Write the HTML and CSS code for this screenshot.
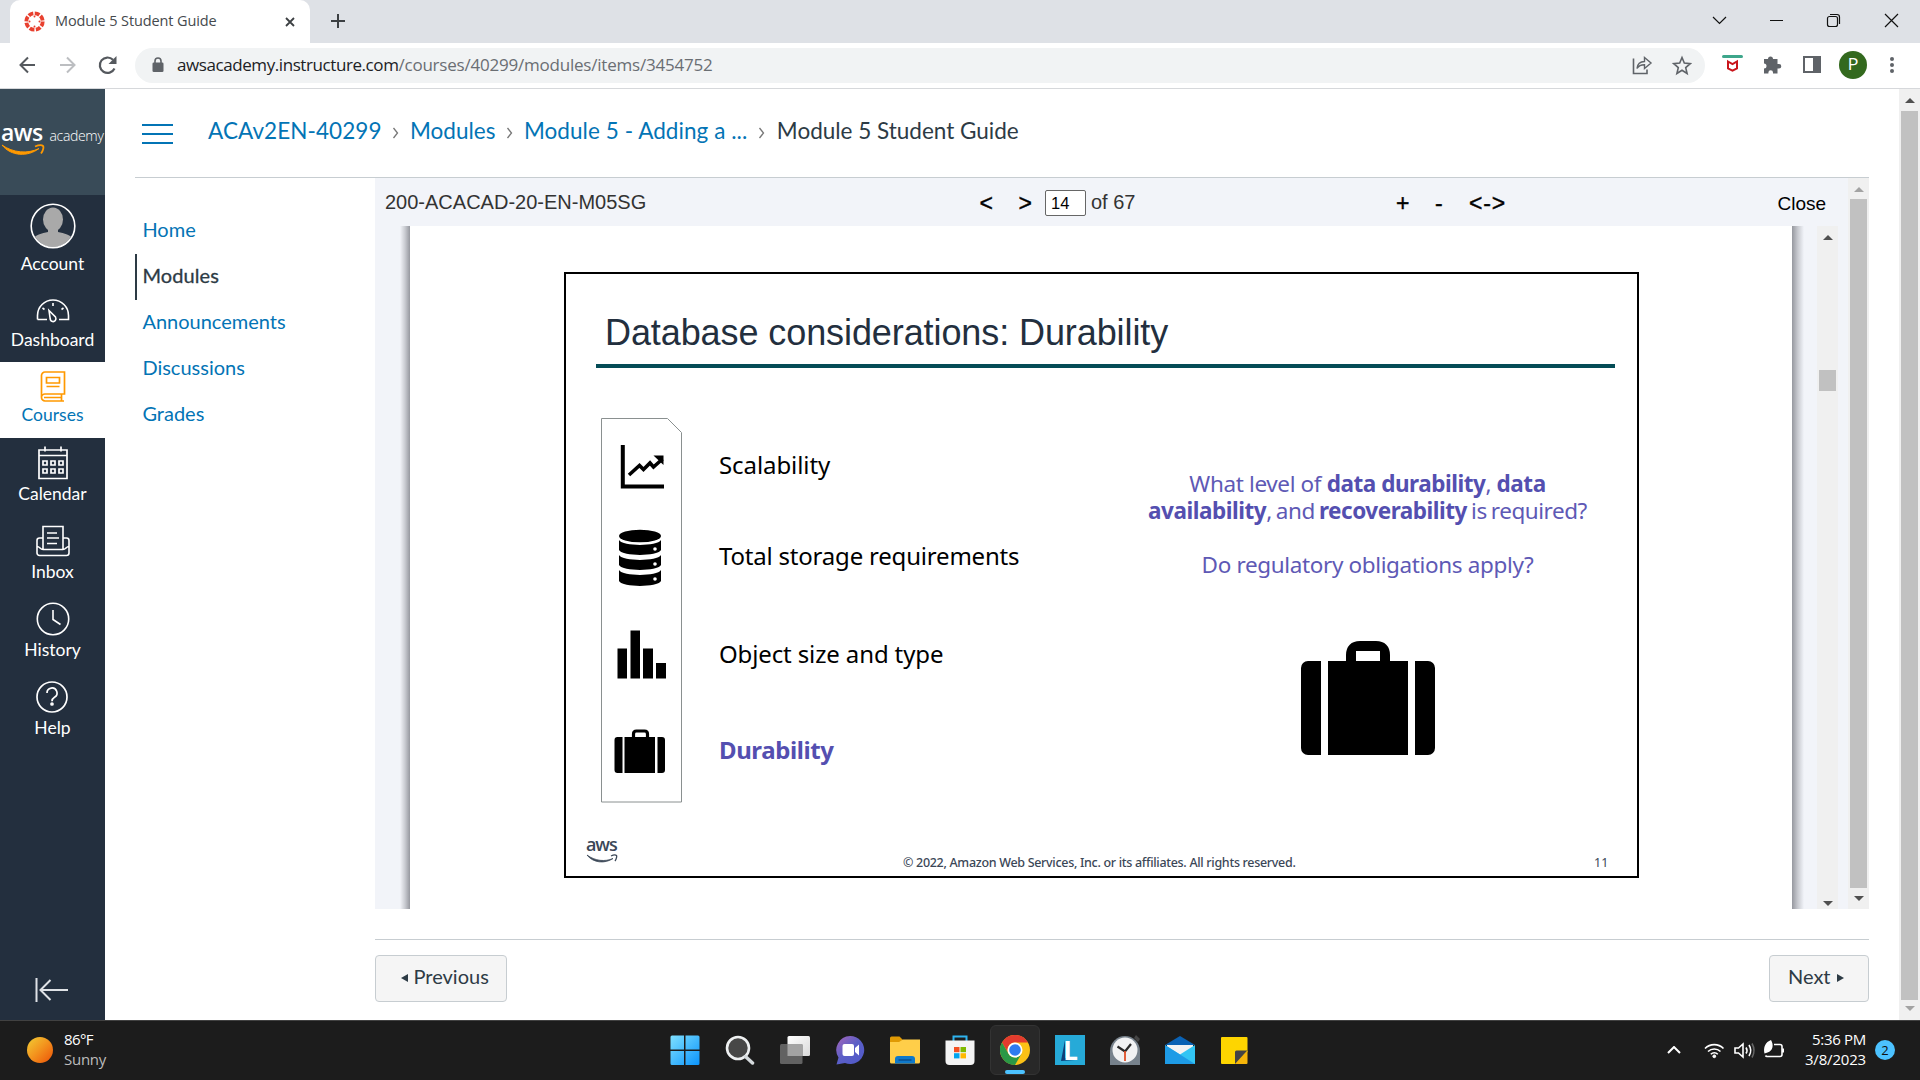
FILE: index.html
```html
<!DOCTYPE html>
<html lang="en">
<head>
<meta charset="utf-8">
<title>Module 5 Student Guide</title>
<link rel="stylesheet" href="styles.css">
</head>
<body>
<div class="screen">
  <header class="tabstrip">
    <div class="tab">
      <svg class="favicon" viewBox="0 0 22 22"><circle cx="11" cy="11" r="8.6" fill="none" stroke="#e8402f" stroke-width="4" stroke-dasharray="5.200 1.554"/><g fill="#e8402f"><circle cx="11" cy="5.800" r="1"/><circle cx="11" cy="16.200" r="1"/><circle cx="5.800" cy="11" r="1"/><circle cx="16.200" cy="11" r="1"/></g></svg>
      <span class="tab-title">Module 5 Student Guide</span>
      <svg class="tab-x" viewBox="0 0 10 10"><path d="M1 1l8 8M9 1l-8 8" stroke="#3c4043" stroke-width="1.8"/></svg>
    </div>
    <svg class="tab-plus" viewBox="0 0 16 16"><path d="M8 1v14M1 8h14" stroke="#3c4043" stroke-width="2"/></svg>
    <svg class="win-controls" viewBox="0 0 190 20" fill="none" stroke="#111" stroke-width="1.2"><path d="M1 7l6.500 6.500L14 7M58 10.500h13"/><rect x="115.500" y="6.500" width="10" height="10" rx="2"/><path d="M118 4.500h7a2.500 2.500 0 0 1 2.500 2.500v7"/><path d="M173 4l13 13M186 4l-13 13"/></svg>
  </header>
  <div class="toolbar">
    <svg class="nav-btns" viewBox="0 0 100 20" fill="none" stroke-width="2"><path d="M17 10H2.500M10 2.500L2.500 10l7.500 7.500" stroke="#55595e"/><path d="M42 10h14.500M49 2.500l7.500 7.500-7.500 7.500" stroke="#bcbec1"/><path d="M96.500 13.500A7.700 7.700 0 1 1 95 4.800" stroke="#55595e" stroke-width="2.200"/><path d="M98.500 1v8h-8z" fill="#55595e"/></svg>
    <div class="omnibox">
      <svg class="lock" viewBox="0 0 12 16"><rect x="0.500" y="5.500" width="11" height="9.500" rx="1.300" fill="#5f6368"/><path d="M3 6V4a3 3 0 0 1 6 0v2" fill="none" stroke="#5f6368" stroke-width="1.600"/></svg>
      <span class="url"><b>awsacademy.instructure.com</b><span>/courses/40299/modules/items/3454752</span></span>
      <svg class="omni-icons" viewBox="0 0 60 22" fill="none" stroke="#5f6368" stroke-width="1.600"><path d="M1.500 4.500v15h13.500v-4"/><path d="M5 14.500c.5-4.500 3-7 7.500-7V3.500l6.500 5.500-6.500 5.500V10.800c-3.500 0-6 1.200-7.500 3.700z" stroke-width="1.400"/><path d="M50 3.500l2.300 5.600 6 .5-4.600 4 1.400 5.900L50 16.300l-5.100 3.200 1.400-5.900-4.600-4 6-.5z"/></svg>
    </div>
    <svg class="ext-icons" viewBox="0 0 102 22"><rect x="0" y="1" width="21" height="3" rx="1.500" fill="#3da68b"/><path d="M6 7.500l4.500 2.700 4.500-2.700v7l-4.500 2.200L6 14.500z" fill="none" stroke="#c9151b" stroke-width="2"/><path d="M42 5h4a2.500 2.500 0 0 1 5 0h4.500v5h1.500a2.300 2.300 0 0 1 0 4.600h-1.500V19.500h-4.500v-1a2.300 2.300 0 0 0-4.600 0v1H42v-5a2.500 2.500 0 0 0 0-5z" fill="#5f6368"/><rect x="82" y="3" width="16" height="15" fill="none" stroke="#5f6368" stroke-width="2"/><rect x="91" y="3" width="7" height="15" fill="#5f6368"/></svg>
    <span class="avatar">P</span>
    <svg class="kebab" viewBox="0 0 4 20" fill="#5f6368"><circle cx="2" cy="4" r="2"/><circle cx="2" cy="10" r="2"/><circle cx="2" cy="16" r="2"/></svg>
  </div>

  <div class="page">
    <nav class="rail">
      <div class="brand">
        <div class="brand-row"><b>aws</b><span>academy</span></div>
        <svg class="smile" viewBox="0 0 44 12"><path d="M1 1C12 9 27 10 38 4.500C27 13 10 12.500 1 1z" fill="#f90" stroke="#f90"/><path d="M34 2.500c4-1.500 7-1.500 8-.5s0 5-2 7.500" fill="none" stroke="#f90" stroke-width="1.800"/></svg>
      </div>
      <a class="rail-item account"><svg viewBox="0 0 46 46"><defs><clipPath id="av"><circle cx="23" cy="23" r="21"/></clipPath></defs><g clip-path="url(#av)" fill="#a9a9a9"><ellipse cx="23" cy="16.500" rx="10" ry="12"/><path d="M18 24h10v5c6 1 13 3 16 8v9H2v-9c3-5 10-7 16-8z"/></g><circle cx="23" cy="23" r="21.800" fill="none" stroke="#fff" stroke-width="1.600"/></svg><span>Account</span></a>
      <a class="rail-item dash"><svg viewBox="0 0 34 24" fill="none" stroke="#fff" stroke-width="1.600"><path d="M1.500 20.500v-4a15.500 15.500 0 0 1 31 0v4H23M1.500 20.500H11"/><path d="M13 11.500l6.500 6.500c1.500 3-1 5-3 4.500-2-.5-2.500-3-2.500-4z"/><path d="M6.500 9l2 1.500M17 4v3M27.500 9l-2 1.500"/></svg><span>Dashboard</span></a>
      <a class="rail-item courses"><svg viewBox="0 0 26 31" fill="none" stroke="#f90" stroke-width="1.700"><path d="M1.500 26V4.500a3.500 3.500 0 0 1 3.500-3.500h19.500v22H5a3.300 3.300 0 0 0 0 7h19M21.500 23v7M4 26.500h17"/><path d="M6.500 6.500h13v5.500h-13zM6.500 15.500h13"/></svg><span>Courses</span></a>
      <a class="rail-item cal"><svg viewBox="0 0 30 34" fill="none" stroke="#fff" stroke-width="1.700"><path d="M1 4h28v28.500H1zM1 9.500h28M7 .5v5M23 .5v5"/><path d="M5 15h4v4H5zM13 15h4v4h-4zM21 15h4v4h-4zM5 23h4v4H5zM13 23h4v4h-4zM21 23h4v4h-4z"/></svg><span>Calendar</span></a>
      <a class="rail-item inbox"><svg viewBox="0 0 34 32" fill="none" stroke="#fff" stroke-width="1.600"><path d="M7 24V1.500h20V24M7 13H3.500a2.500 2.500 0 0 0-2.500 2.500V28a2.500 2.500 0 0 0 2.500 2.500h27A2.500 2.500 0 0 0 33 28V15.500a2.500 2.500 0 0 0-2.500-2.500H27M1 21.500c3 0 3 3 6 3h20c3 0 3-3 6-3M11 8h10M11 13h12M11 18.500h10"/></svg><span>Inbox</span></a>
      <a class="rail-item hist"><svg viewBox="0 0 34 34" fill="none" stroke="#fff" stroke-width="1.600"><circle cx="17" cy="17" r="15.700"/><path d="M17 8v9.500l7.500 5"/></svg><span>History</span></a>
      <a class="rail-item help"><svg viewBox="0 0 34 34" fill="none" stroke="#fff" stroke-width="1.700"><circle cx="16" cy="17" r="15"/><path d="M11 13a5 5 0 1 1 7.500 4.300c-2 1.200-2.500 2-2.500 4"/><circle cx="16" cy="24" r="1"/></svg><span>Help</span></a>
      <svg class="collapse" viewBox="0 0 34 24" fill="none" stroke="#dfe2e6" stroke-width="2"><path d="M1.500 0v24M33 12H6M15.500 2L5.500 12l10 10"/></svg>
    </nav>

    <main class="content">
      <div class="crumbs">
        <svg class="burger" viewBox="0 0 31 20"><path d="M0 1h31M0 10h31M0 19h31" stroke="#0374b5" stroke-width="1.800"/></svg>
        <a class="c1">ACAv2EN-40299</a>
        <svg class="sep" viewBox="0 0 8 14"><path d="M1.500 2l4 5-4 5" fill="none" stroke="#777" stroke-width="1.300"/></svg>
        <a>Modules</a>
        <svg class="sep" viewBox="0 0 8 14"><path d="M1.500 2l4 5-4 5" fill="none" stroke="#777" stroke-width="1.300"/></svg>
        <a class="c3">Module 5 - Adding a ...</a>
        <svg class="sep" viewBox="0 0 8 14"><path d="M1.500 2l4 5-4 5" fill="none" stroke="#777" stroke-width="1.300"/></svg>
        <span class="here">Module 5 Student Guide</span>
      </div>
      <div class="columns">
        <nav class="course-nav"><a>Home</a><a class="active">Modules</a><a>Announcements</a><a>Discussions</a><a>Grades</a></nav>
        <section class="main-col">
          <div class="frame">
            <div class="viewer">
              <div class="viewer-bar">
                <span class="doc">200-ACACAD-20-EN-M05SG</span>
                <span class="pager"><b>&lt;</b><b>&gt;</b><input value="14" aria-label="Page"><span class="of">of 67</span></span>
                <span class="zoomers"><b>+</b><b>-</b><b>&lt;-&gt;</b></span>
                <span class="close">Close</span>
              </div>
              <div class="doc-view">
                <div class="paper">
                  <article class="slide">
                    <h1>Database considerations: Durability</h1>
                    <div class="slide-body">
                      <svg class="icon-strip" viewBox="0 0 82 386"><path d="M.5 .5H66.500L80.500 14.500V384H.5z" fill="#fff" stroke="#8a9090"/>
                        <g><path d="M21.800 27v41.500H63" fill="none" stroke="#000" stroke-width="4"/><path d="M28 57l10.500-9.500 4 4 6.500-6.500 3.500 4 9-8" fill="none" stroke="#000" stroke-width="3.600"/><path d="M52.500 37.500h10v9.500z"/></g>
                        <g><ellipse cx="39" cy="118" rx="21" ry="6.300"/><path d="M18 122c4 6.500 38 6.500 42 0v10c-4 6.500-38 6.500-42 0zM18 137c4 6.500 38 6.500 42 0v10c-4 6.500-38 6.500-42 0zM18 152c4 6.500 38 6.500 42 0v11c-4 6.500-38 6.500-42 0z"/><g fill="#fff"><circle cx="54" cy="131" r="1.800"/><circle cx="54" cy="146" r="1.800"/><circle cx="54" cy="161" r="1.800"/></g></g>
                        <path d="M16.500 230.500H26v30h-9.500zM29.500 212.500h9.500v48h-9.500zM42 230.500h10v30H42zM55 245h10v15.500H55z"/>
                        <g><path d="M16.500 319h5v36h-5a3 3 0 0 1-3-3v-30a3 3 0 0 1 3-3zM23.500 319h30.500v36H23.500zM56.500 319H61a3 3 0 0 1 3 3v30a3 3 0 0 1-3 3h-4.500z"/><path d="M32.500 319v-3q0-3 3-3h8q3 0 3 3v3" fill="none" stroke="#000" stroke-width="3.200"/></g>
                      </svg>
                      <ul class="topics"><li>Scalability</li><li class="long">Total storage requirements</li><li class="mid">Object size and type</li><li class="on">Durability</li></ul>
                      <div class="question">
                        <p>What level of <strong>data durability</strong>, <strong>data</strong></p>
                        <p class="tight"><strong>availability</strong>, and <strong>recoverability</strong> is required?</p>
                        <p class="gap">Do regulatory obligations apply?</p>
                        <svg class="case" viewBox="0 0 134 114"><path d="M7 20h13v94H7a7 7 0 0 1-7-7V27a7 7 0 0 1 7-7zM27 20h80v94H27zM114 20h13a7 7 0 0 1 7 7v80a7 7 0 0 1-7 7h-13z"/><path d="M50 20v-6q0-9 9-9h16q9 0 9 9v6" fill="none" stroke="#000" stroke-width="10"/><path d="M55 10h24v10H55z" fill="#fff"/></svg>
                      </div>
                    </div>
                    <footer class="slide-foot">
                      <div class="mini"><b>aws</b><svg viewBox="0 0 32 9"><path d="M1 1c8 6 18 7 26 3.500C19 10 7 9 1 1z" fill="#3b4757" stroke="#3b4757" stroke-width=".8"/><path d="M25 2c3-1.500 5-1 5.500-.5s0 3.500-1.500 5.500" fill="none" stroke="#3b4757" stroke-width="1.300"/></svg></div>
                      <span class="copy">© 2022, Amazon Web Services, Inc. or its affiliates. All rights reserved.</span>
                      <span class="num">11</span>
                    </footer>
                  </article>
                </div>
                <div class="bar inner"><i class="up"></i><i class="thumb"></i><i class="down"></i></div>
              </div>
            </div>
            <div class="bar outer"><i class="up dim"></i><i class="thumb"></i><i class="down"></i></div>
          </div>
          <div class="pager-row">
            <a class="btn prev"><svg viewBox="0 0 7 8"><path d="M7 0v8L0 4z" fill="#2d3b45"/></svg><span>Previous</span></a>
            <a class="btn next"><span>Next</span><svg viewBox="0 0 7 8"><path d="M0 0v8l7-4z" fill="#2d3b45"/></svg></a>
          </div>
        </section>
      </div>
    </main>
    <div class="bar win"><i class="up"></i><i class="thumb"></i><i class="down dim"></i></div>
  </div>

  <footer class="taskbar">
    <div class="weather"><i class="sun"></i><div><span class="temp">86°F</span><span class="cond">Sunny</span></div></div>
    <div class="apps">
      <span><svg viewBox="0 0 30 30"><defs><linearGradient id="w" x2="1" y2="1"><stop stop-color="#7fe0ff"/><stop offset="1" stop-color="#0b94fb"/></linearGradient></defs><path fill="url(#w)" d="M.5 2q0-1.500 1.500-1.500h12v14H.5zM15.500.5h12.500q1.500 0 1.500 1.500v12.500h-14zM.5 16h13.500v14H2q-1.500 0-1.500-1.500zM15.500 16h14v12.500q0 1.500-1.500 1.500H15.500z"/></svg></span>
      <span><svg viewBox="0 0 30 30"><circle cx="13" cy="13" r="11" fill="#474747" stroke="#eef0f1" stroke-width="2.600"/><path d="M20.500 21.500l7 6.500" stroke="#d5dadd" stroke-width="3.500" stroke-linecap="round"/></svg></span>
      <span><svg viewBox="0 0 30 30"><defs><linearGradient id="tv" x2="1" y2="1"><stop stop-color="#fff"/><stop offset="1" stop-color="#d9d9d9"/></linearGradient></defs><rect x="7.500" y="1" width="22.500" height="20" rx="1.500" fill="url(#tv)"/><rect x="0" y="9" width="22.500" height="20" rx="1.500" fill="#626262"/><rect x="7.500" y="9" width="15" height="12" fill="#a3a3a3"/></svg></span>
      <span><svg viewBox="0 0 30 30"><defs><linearGradient id="ch" x2=".9" y2="1"><stop stop-color="#a765b8"/><stop offset=".5" stop-color="#5b5fc7"/><stop offset="1" stop-color="#5059c9"/></linearGradient></defs><path d="M15 1a14 14 0 1 1-5 27l-8.500 1.500 2-7A14 14 0 0 1 15 1z" fill="url(#ch)"/><rect x="7.500" y="9" width="11.500" height="12" rx="2" fill="#fff"/><path d="M20 13l4-3.500v11L20 17z" fill="#fff"/></svg></span>
      <span><svg viewBox="0 0 30 30"><path d="M0 3q0-1.500 1.500-1.500h8L13 5v5H0z" fill="#e09a04"/><path d="M0 7h9l4-2.500h17V27q0 1.500-1.500 1.500h-27Q0 28.500 0 27z" fill="#ffce49"/><path d="M5 28.500V24q0-3 3-3h14q3 0 3 3v4.500z" fill="#0f79ca"/><path d="M8.500 25h13" stroke="#0a4f91" stroke-width="1.500"/></svg></span>
      <span><svg viewBox="0 0 30 30"><path d="M8.500 7V1.500h13V7" fill="none" stroke="#2eb3ee" stroke-width="2"/><path d="M.5 5.500h29V26q0 4-4 4h-21q-4 0-4-4z" fill="#f4f4f4"/><path d="M9 12h5.500v5.200H9z" fill="#f25022"/><path d="M15.500 12H21v5.200h-5.500z" fill="#7fba00"/><path d="M9 18.200h5.500v5.200H9z" fill="#00a4ef"/><path d="M15.500 18.200H21v5.200h-5.500z" fill="#ffb900"/></svg></span>
      <span class="running"><svg viewBox="0 0 30 30"><circle cx="15" cy="15" r="15" fill="#fbc116"/><path d="M2 7.500A15 15 0 0 1 28 7.500H15a7.500 7.500 0 0 0-6.500 11.300z" fill="#e33b2e"/><path d="M2 7.500a15 15 0 0 0 13 22.500l6.500-11.300a7.500 7.500 0 0 1-13 0z" fill="#2a9846"/><circle cx="15" cy="15" r="7.500" fill="#fff"/><circle cx="15" cy="15" r="5.800" fill="#2f7bf0"/></svg></span>
      <span><svg viewBox="0 0 30 30"><path d="M0 0h30v30H0z" fill="#26aad8"/><path d="M10 5L6 26l14-1-10-2z" fill="#0d3f77"/></svg><b class="ell">L</b></span>
      <span><svg viewBox="0 0 30 30"><path d="M0 16A15 15 0 0 1 30 16v14H0z" fill="#77828c"/><path d="M24 3l2-3 4 4-2 3z" fill="#444"/><circle cx="15" cy="15" r="12.500" fill="#f1f2f3"/><path d="M7.500 11.500l7.500 5 6-7.500" fill="none" stroke="#2a2a2a" stroke-width="2.200"/><path d="M15 16v10" stroke="#e0512a" stroke-width="1.800"/></svg></span>
      <span><svg viewBox="0 0 30 30"><path d="M0 10L15 1l15 9z" fill="#0a62b4"/><path d="M2 10h26v10H2z" fill="#f3f3f3"/><path d="M0 10l15 9.500L30 10v19H0z" fill="#32c5f4"/><path d="M0 10l30 19H0z" fill="#1e9be6"/></svg></span>
      <span><svg viewBox="0 0 30 30"><path d="M3 2h24.500q1 0 1 1v14L16 29H3q-1 0-1-1V3q0-1 1-1z" fill="#fed500"/><path d="M16 29V17q0-1.500 1.500-1.500h11z" fill="#444"/><path d="M28.500 15.500V28q0 1-1 1H16z" fill="#f5b50a"/></svg></span>
    </div>
    <div class="tray">
      <svg class="chev" viewBox="0 0 14 8"><path d="M1 7l6-6 6 6" fill="none" stroke="#fff" stroke-width="2"/></svg>
      <svg class="sys" viewBox="0 0 80 20" fill="none" stroke="#fff" stroke-width="1.600"><path d="M1 8.500a13 13 0 0 1 18.500 0M4 11.500a9 9 0 0 1 12.500 0M6.800 14.300a5 5 0 0 1 7 0"/><circle cx="10.300" cy="16.300" r="1.400" fill="#fff" stroke-width="1"/><path d="M31 8h3.500L39 4v13l-4.500-4H31zM42 7.500q2 3 0 6M45 5q3.500 5.500 0 11"/><path d="M48 3.500q4 7 0 14" stroke="#666"/><path d="M70 4.500h6a2 2 0 0 1 2 2v8a2 2 0 0 1-2 2H63a2 2 0 0 1-1.500-1M79.500 8.500v4"/><path d="M60.500 13.500c-1.500-6 1-11.500 6.500-13.500 3 5 2 11-3.500 12.500z" fill="#fff" stroke="none"/></svg>
      <div class="clock"><span class="time">5:36 PM</span><span>3/8/2023</span></div>
      <i class="badge">2</i>
    </div>
  </footer>
</div>
</body>
</html>
```
FILE: styles.css
```css
* { box-sizing: border-box; }
body { margin: 0; background: #fff; font-family: Lato, "Liberation Sans", sans-serif; color: #2d3b45; overflow: hidden; }
svg { display: block; flex: none; }
span, a, b, strong, p { white-space: pre; }
.screen { width: 1920px; height: 1080px; display: flex; flex-direction: column; }

/* Browser window */
.tabstrip { height: 43px; flex: none; background: #dee1e6; display: flex; align-items: center; padding-left: 10px; }
.tab { width: 300px; height: 43px; background: #fff; border-radius: 10px 10px 0 0; display: flex; align-items: center; padding: 0 15px 0 14px; }
.favicon { width: 21px; height: 21px; margin: 0 10px 1px 0; }
.tab-title { font: 14.5px/20px "Open Sans", sans-serif; letter-spacing: -0.12px; color: #45494d; flex: 1; padding-bottom: 2px; }
.tab-x { width: 10px; height: 10px; }
.tab-plus { width: 16px; height: 16px; margin: 0 0 1px 19.500px; }
.win-controls { width: 190px; height: 20px; margin: 0 18px 4px auto; }
.toolbar { height: 46px; flex: none; border-bottom: 1px solid #d6d8db; display: flex; align-items: center; padding: 0 25px 1px 18px; }
.nav-btns { width: 100px; height: 20px; }
.omnibox { margin-left: 17px; width: 1570px; height: 35px; border-radius: 18px; background: #f1f3f4; display: flex; align-items: center; padding: 0 13px 0 17px; }
.lock { width: 12px; height: 16px; margin-right: 13px; }
.url { flex: 1; font: 17px/24px "Open Sans", sans-serif; letter-spacing: -0.216px; color: #6a6e73; }
.url b { font-weight: 400; color: #202124; letter-spacing: -0.42px; }
.omni-icons { width: 60px; height: 22px; }
.ext-icons { width: 102px; height: 22px; margin-left: 17px; }
.avatar { width: 28px; height: 28px; margin-left: 15px; border-radius: 50%; background: #33691e; color: #fff; font: 16px/28px Roboto, sans-serif; text-align: center; }
.kebab { width: 4px; height: 20px; margin-left: 23px; }

.page { flex: 1; min-height: 0; display: flex; }

/* Global navigation */
.rail { width: 105px; flex: none; background: #232f3e; display: flex; flex-direction: column; }
.brand { height: 106px; background: #394b58; padding: 32px 0 0 1px; color: #fff; }
.brand-row { display: flex; align-items: baseline; gap: 7px; line-height: 22px; height: 23px; }
.brand-row b { font: 600 23px/22px "Open Sans", sans-serif; letter-spacing: -0.6px; }
.brand-row span { font: 300 14px/22px "Open Sans", sans-serif; letter-spacing: -0.33px; }
.smile { width: 44px; height: 12px; }
.rail-item { display: flex; flex-direction: column; align-items: center; color: #fff; font-size: 17.5px; line-height: 22px; }
.account { height: 92px; padding-top: 8px; }
.account svg { width: 46px; height: 46px; margin-bottom: 4px; }
.dash { height: 75px; padding-top: 12px; }
.dash svg { width: 34px; height: 24px; margin-bottom: 6px; }
.courses { height: 76px; background: #fff; color: #0374b5; padding-top: 9px; }
.courses svg { width: 26px; height: 31px; margin-bottom: 2px; }
.cal { height: 78px; padding-top: 8px; }
.cal svg { width: 30px; height: 34px; margin-bottom: 3px; }
.inbox { height: 78px; padding-top: 9px; }
.inbox svg { width: 34px; height: 32px; margin-bottom: 4px; }
.hist { height: 78px; padding-top: 8px; }
.hist svg, .help svg { width: 34px; height: 34px; margin-bottom: 3px; }
.help { height: 78px; padding-top: 8px; }
.collapse { width: 34px; height: 24px; margin: auto 0 18px 35px; }

/* Course content */
.content { flex: 1; padding: 0 30px; display: flex; flex-direction: column; }
.crumbs { height: 89px; flex: none; border-bottom: 1px solid #c7cdd1; display: flex; align-items: center; padding: 0 0 4px 7px; font-size: 22.5px; line-height: 28px; color: #0374b5; }
.burger { width: 31px; height: 20px; margin: 6px 35px 0 0; }
.crumbs .c1 { letter-spacing: 0.07px; }
.crumbs .c3 { letter-spacing: 0.06px; }
.sep { width: 8px; height: 14px; margin: 4px 10px 0 10.500px; }
.sep + .here { margin-left: 1px; }
.here { color: #2d3b45; }
.columns { flex: 1; display: flex; min-height: 0; }
.course-nav { width: 240px; padding-top: 30px; }
.course-nav a { display: flex; height: 46px; align-items: center; padding: 0 0 4px 7.400px; font-size: 20px; color: #0374b5; }
.course-nav .active { border-left: 2px solid #2d3b45; padding-left: 5.400px; color: #2d3b45; letter-spacing: 0.1px; -webkit-text-stroke: 0.3px #2d3b45; }
.main-col { width: 1494px; display: flex; flex-direction: column; }
.frame { height: 731px; display: flex; background: #f2f4f9; }
.viewer { width: 1473px; display: flex; flex-direction: column; }
.viewer-bar { height: 48px; display: flex; align-items: center; padding-left: 10px; font: 20px/24px "Liberation Sans", Arial, sans-serif; color: #333; }
.doc { width: 592px; padding-bottom: 1px; }
.pager { display: flex; align-items: center; width: 417px; height: 28px; }
.pager b, .zoomers b { color: #000; font-weight: 400; font-size: 23px; padding-top: 1px; -webkit-text-stroke: 0.4px #000; }
.pager b { width: 39px; padding-left: 2.500px; }
.pager b + b { width: 29px; }
.pager input { width: 41px; height: 26px; border: 1px solid #666; border-radius: 2px; padding: 0 0 0 5px; font: 16.5px "Liberation Sans", Arial, sans-serif; color: #000; margin: 2px 5px 0 0; }
.of { padding-bottom: 1px; }
.zoomers { display: flex; width: 383.500px; padding-left: 2px; }
.zoomers b { width: 39px; }
.zoomers b + b { width: 34px; letter-spacing: 0.8px; }
.close { color: #000; font-size: 19px; padding-top: 3px; }
.doc-view { flex: 1; display: flex; }
.paper { margin-left: 35px; width: 1382px; background: #fff; position: relative; padding: 46px 0 0 154px; }
.paper::before, .paper::after { content: ""; position: absolute; top: 0; bottom: 0; width: 10px; }
.paper::before { left: -10px; background: linear-gradient(to left, #96989f, #c9cbd1 50%, #f2f4f900); }
.paper::after { right: -12px; width: 12px; background: linear-gradient(to right, #96989f, #c9cbd1 50%, #f2f4f900); }

/* Slide */
.slide { width: 1075px; height: 606px; border: 2px solid #000; padding: 37px 22px 0 30px; display: flex; flex-direction: column; color: #000; font-family: "Noto Sans", "Open Sans", sans-serif; }
.slide h1 { margin: 0; width: 1019px; height: 57px; flex: none; border-bottom: 4px solid #044c56; padding: 1px 0 0 9px; font: 36px/42px "Liberation Sans", Arial, sans-serif; letter-spacing: -0.09px; color: #232f3e; }
.slide-body { height: 434px; flex: none; display: flex; padding: 50px 0 0 5px; }
.icon-strip { width: 82px; height: 386px; }
.topics { list-style: none; margin: 29px 0 0; padding: 0 0 0 36px; width: 464px; font-size: 24px; line-height: 36px; flex: none; }
.topics li { height: 97px; }
.topics li:first-child { height: 91px; letter-spacing: -0.08px; }
.topics .long { letter-spacing: -0.2px; }
.topics .mid { letter-spacing: -0.13px; padding-top: 1px; }
.topics .on { color: #544fb0; font-weight: 700; letter-spacing: -0.4px; }
.question { margin-top: 52px; width: 441px; display: flex; flex-direction: column; align-items: center; color: #5e59b5; font-size: 22.5px; line-height: 27px; letter-spacing: -0.36px; }
.question p { margin: 0; }
.question strong { color: #544fb0; letter-spacing: -0.47px; }
.question .tight { word-spacing: -1.300px; letter-spacing: -0.46px; }
.question .gap { margin-top: 27px; }
.case { width: 134px; height: 114px; margin-top: 63px; }
.slide-foot { display: flex; align-items: flex-start; font-size: 12.5px; line-height: 16px; color: #3b4757; margin: 53px 0 0 -10px; }
.mini { width: 317px; margin-top: -21px; }
.mini b { display: block; font: 600 18px/20px "Open Sans", sans-serif; letter-spacing: -1.1px; }
.mini svg { width: 32px; height: 9px; }
.copy { width: 691px; font-weight: 500; letter-spacing: -0.305px; }

/* Scrollbars */
.bar { width: 21px; flex: none; background: #f0f0f0; display: flex; flex-direction: column; align-items: center; }
.bar i { display: block; }
.bar .up, .bar .down { width: 0; height: 0; border: 5px solid transparent; }
.bar .up { border-top: 0; border-bottom-color: #505050; }
.bar .down { border-bottom: 0; border-top-color: #505050; }
.bar .up.dim { border-bottom-color: #a3a3a3; }
.bar .down.dim { border-top-color: #a3a3a3; }
.thumb { width: 17px; background: #c1c1c1; }
.inner { margin-left: 25px; padding: 9px 0 3px; }
.inner .thumb { height: 21px; margin: 130px 0 auto; }
.outer { padding: 9px 0 8px; }
.outer .thumb { height: 689px; margin: 7px 0 auto; }
.win { padding: 9px 0 9px; }
.win .thumb { height: 889px; margin: 8px 0 auto; }

.pager-row { margin-top: 30px; border-top: 1px solid #c7cdd1; padding-top: 15px; display: flex; justify-content: space-between; }
.btn { height: 47px; border: 1px solid #c7cdd1; border-radius: 4px; background: #f5f5f5; display: flex; align-items: center; font-size: 20px; padding-bottom: 5px; }
.btn svg { width: 7px; height: 8px; margin-top: 4px; }
.prev { width: 132px; padding-left: 24.500px; gap: 6px; }
.next { width: 100px; padding-left: 18px; gap: 6.500px; }

/* Taskbar */
.taskbar { height: 60px; flex: none; background: #1c1c1c; border-top: 1px solid #414141; display: flex; align-items: center; font: 15px/20px "Open Sans", sans-serif; color: #fff; }
.weather { display: flex; align-items: center; width: 658px; padding-left: 27px; gap: 11px; }
.sun { width: 26px; height: 26px; margin-bottom: 2px; border-radius: 50%; background: linear-gradient(135deg, #f2c230 10%, #f3921d 50%, #ee640e 85%); }
.weather span, .clock span { display: block; }
.weather > div { padding-bottom: 4px; }
.clock { padding-bottom: 3px; }
.temp { letter-spacing: -0.58px; }
.cond { color: #bdbdbd; letter-spacing: -0.27px; }
.apps { display: flex; padding-bottom: 1px; }
.apps > span { width: 54.900px; height: 50px; display: flex; align-items: center; justify-content: center; position: relative; }
.apps svg { width: 30px; height: 30px; }
.apps .running { width: 50px; margin: 0 2.500px; background: #282828; border: 1px solid #333; border-radius: 6px; }
.running::after { content: ""; position: absolute; left: 14px; bottom: 0; width: 20px; height: 4px; border-radius: 2px; background: #4cc2ff; }
.ell { position: absolute; left: 21px; top: 10px; font: 700 26px/30px "Open Sans", sans-serif; }
.tray { margin-left: auto; display: flex; align-items: center; padding: 0 25px 1px 0; }
.chev { width: 14px; height: 8px; margin-right: 23px; }
.sys { width: 80px; height: 20px; }
.clock { width: 82px; text-align: right; letter-spacing: -0.18px; }
.clock .time { letter-spacing: -0.3px; }
.badge { width: 20px; height: 20px; margin-left: 9px; border-radius: 50%; background: #4cc2ff; color: #111; font: 13px/20px "Open Sans", sans-serif; text-align: center; }
```
